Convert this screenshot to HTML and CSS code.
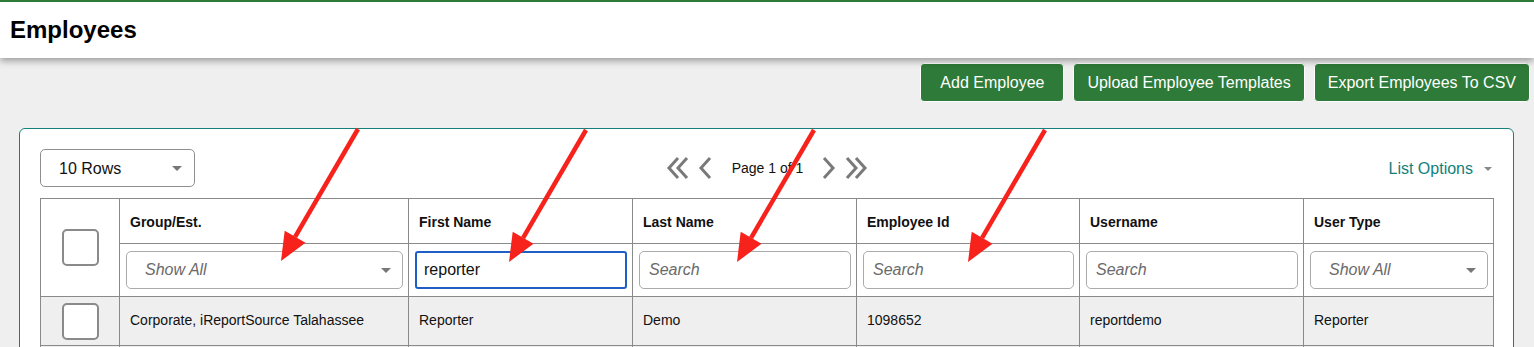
FILE: index.html
```html
<!DOCTYPE html>
<html lang="en">
<head>
<meta charset="utf-8">
<title>Employees</title>
<link rel="stylesheet" href="styles.css">
</head>
<body>
<div class="page-head">
	<h1>Employees</h1>
</div>

<div class="toolbar">
	<button class="btn" type="button">Add Employee</button>
	<button class="btn" type="button">Upload Employee Templates</button>
	<button class="btn" type="button">Export Employees To CSV</button>
</div>

<div class="card">
	<div class="list-controls">
		<div class="rows-select">10 Rows<span class="caret"></span></div>
		<div class="pager">
			<svg class="chev dbl" width="24" height="24" viewBox="0 0 24 24"><path d="M12 2 L3 12 L12 22 M21 2 L12 12 L21 22"/></svg>
			<svg class="chev" width="15" height="24" viewBox="0 0 15 24"><path d="M12 2 L3 12 L12 22"/></svg>
			<span class="page-info">Page 1 of 1</span>
			<svg class="chev" width="15" height="24" viewBox="0 0 15 24"><path d="M3 2 L12 12 L3 22"/></svg>
			<svg class="chev dbl" width="24" height="24" viewBox="0 0 24 24"><path d="M3 2 L12 12 L3 22 M12 2 L21 12 L12 22"/></svg>
		</div>
		<div class="list-options">List Options<span class="caret"></span></div>
	</div>

	<table class="grid">
		<colgroup>
			<col style="width:79px">
			<col style="width:289px">
			<col style="width:224px">
			<col style="width:224px">
			<col style="width:223px">
			<col style="width:224px">
			<col>
		</colgroup>
		<thead>
			<tr class="head-row">
				<th rowspan="2" class="chk-cell"><span class="chk"></span></th>
				<th>Group/Est.</th>
				<th>First Name</th>
				<th>Last Name</th>
				<th>Employee Id</th>
				<th>Username</th>
				<th>User Type</th>
			</tr>
			<tr class="filter-row">
				<td><div class="field select"><span class="ph">Show All</span><span class="caret"></span></div></td>
				<td><div class="field focus">reporter</div></td>
				<td><div class="field"><span class="ph">Search</span></div></td>
				<td><div class="field"><span class="ph">Search</span></div></td>
				<td><div class="field"><span class="ph">Search</span></div></td>
				<td><div class="field select"><span class="ph">Show All</span><span class="caret"></span></div></td>
			</tr>
		</thead>
		<tbody>
			<tr class="data-row">
				<td class="chk-cell"><span class="chk"></span></td>
				<td>Corporate, iReportSource Talahassee</td>
				<td>Reporter</td>
				<td>Demo</td>
				<td>1098652</td>
				<td>reportdemo</td>
				<td>Reporter</td>
			</tr>
			<tr class="data-row">
				<td class="chk-cell"></td>
				<td></td><td></td><td></td><td></td><td></td><td></td>
			</tr>
		</tbody>
	</table>
</div>

<!-- annotation arrows drawn over the screenshot -->
<svg class="marks" width="1534" height="347" viewBox="0 0 1534 347">
	<defs>
		<g id="arrow">
			<path d="M0 0 L-62.9 107.8" stroke="#f6221b" stroke-width="4.5" fill="none"/>
			<polygon points="-77,132 -52.5,113.8 -73.3,101.8" fill="#f6221b"/>
		</g>
	</defs>
	<use href="#arrow" x="358" y="129"/>
	<use href="#arrow" x="586" y="130"/>
	<use href="#arrow" x="814" y="130"/>
	<use href="#arrow" x="1045" y="130"/>
</svg>
</body>
</html>
```

FILE: styles.css
```css
* {
	box-sizing: border-box;
}
body {
	margin: 0;
	background: #efefef;
	font-family: "Liberation Sans", Arial, Helvetica, sans-serif;
	color: #111;
	height: 347px;
	overflow: hidden;
	position: relative;
}

/* page header */
.page-head {
	height: 58px;
	background: #fff;
	border-top: 2px solid #2e7a38;
	box-shadow: 0 3px 7px rgba(0, 0, 0, 0.35);
	position: relative;
	z-index: 1;
	display: flex;
	align-items: center;
	padding-left: 10px;
}
.page-head h1 {
	margin: 0 0 1px;
	font-size: 24px;
	font-weight: bold;
	color: #000;
}

/* action buttons */
.toolbar {
	display: flex;
	justify-content: flex-end;
	gap: 9px;
	padding: 5px 4px 0 0;
}
.btn {
	height: 39px;
	min-width: 144px;
	padding: 0 13px;
	border: 1px solid #fff;
	border-radius: 4px;
	background: #2e7a38;
	color: #fff;
	font-family: inherit;
	font-size: 16px;
}

/* list card */
.card {
	margin: 26px 20px 0 19px;
	background: #fff;
	border: 1px solid #16807c;
	border-radius: 6px;
	padding: 20px 19px 20px 20px;
}
.list-controls {
	display: grid;
	grid-template-columns: 1fr auto 1fr;
	align-items: center;
	height: 38px;
	margin-bottom: 11px;
}
.rows-select {
	width: 155px;
	height: 38px;
	border: 1px solid #8e8e8e;
	border-radius: 5px;
	padding: 1px 12px 0 18px;
	display: flex;
	align-items: center;
	justify-content: space-between;
	font-size: 16px;
}
.caret {
	width: 0;
	height: 0;
	border-left: 5px solid transparent;
	border-right: 5px solid transparent;
	border-top: 5px solid #777;
}
.pager {
	display: flex;
	align-items: center;
	gap: 8px;
}
.chev path {
	fill: none;
	stroke: #7a7a7a;
	stroke-width: 3;
}
.page-info {
	font-size: 14px;
	margin: 0 10px 0 11px;
}
.list-options {
	justify-self: end;
	display: flex;
	align-items: center;
	gap: 11px;
	color: #137f7b;
	font-size: 16px;
	padding: 1px 2px 0 0;
}
.list-options .caret {
	border-left-width: 4px;
	border-right-width: 4px;
	border-top-width: 4px;
	border-top-color: #888;
}

/* grid table */
.grid {
	width: 100%;
	border-collapse: collapse;
	table-layout: fixed;
	font-size: 14px;
}
.grid th,
.grid td {
	border: 1px solid #8a8a8a;
	padding: 0 0 0 10px;
	text-align: left;
}
.head-row th {
	height: 45px;
	font-weight: bold;
	vertical-align: middle;
	padding-top: 1px;
}
.filter-row td {
	height: 53px;
	padding: 0 5px 0 6px;
}
.filter-row td + td {
	padding-left: 6px;
}
.data-row td {
	height: 49px;
	background: #efefef;
	padding-bottom: 2px;
}
.grid .chk-cell {
	padding: 0;
	text-align: center;
	background: #fff;
}
.data-row .chk-cell {
	background: #efefef;
}
.chk {
	display: inline-block;
	width: 37px;
	height: 37px;
	border: 2px solid #8a8a8a;
	border-radius: 5px;
	background: #fff;
	vertical-align: middle;
}
.field {
	height: 38px;
	border: 1px solid #ababab;
	border-radius: 5px;
	display: flex;
	align-items: center;
	padding: 0 9px;
	font-size: 16px;
	background: #fff;
}
.field .ph {
	color: #6a6a6a;
	font-style: italic;
}
.field.select {
	justify-content: space-between;
	padding: 0 11px 0 18px;
}
.field.focus {
	border: 2px solid #1d5fc4;
	border-radius: 3px;
	padding-left: 7px;
	color: #111;
}

/* annotations */
.marks {
	position: absolute;
	top: 0;
	left: 0;
	pointer-events: none;
	z-index: 2;
}
```
